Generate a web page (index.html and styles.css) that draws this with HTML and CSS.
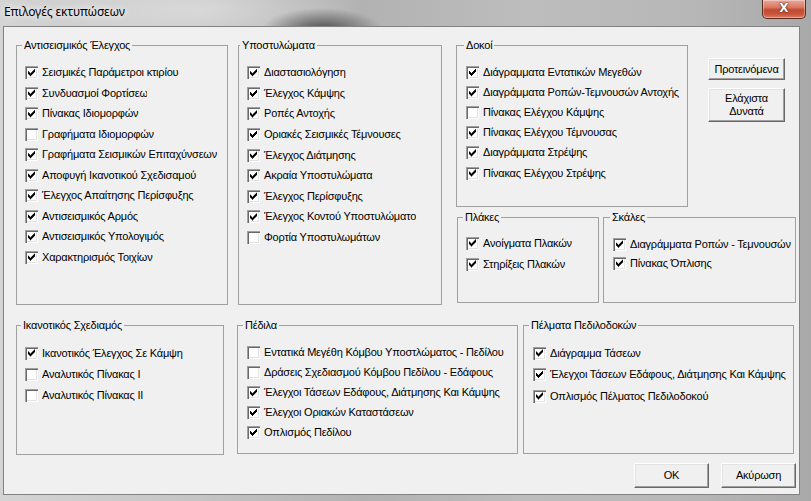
FILE: index.html
```html
<!DOCTYPE html>
<html lang="el">
<head>
<meta charset="utf-8">
<title>Επιλογές εκτυπώσεων</title>
<link rel="stylesheet" href="styles.css">
</head>
<body>
<div class="window">
  <div class="titlebar">
    <span class="title">Επιλογές εκτυπώσεων</span>
    <span class="close">X</span>
  </div>
  <div class="frame">
    <div class="client">
      <div class="top">
        <fieldset class="grp g-seis">
          <legend>Αντισεισμικός Έλεγχος</legend>
          <label class="chk"><span class="box on"></span><span class="txt">Σεισμικές Παράμετροι κτιρίου</span></label>
          <label class="chk"><span class="box on"></span><span class="txt clip-a">Συνδυασμοί Φορτίσεων</span></label>
          <label class="chk"><span class="box on"></span><span class="txt">Πίνακας Ιδιομορφών</span></label>
          <label class="chk"><span class="box"></span><span class="txt">Γραφήματα Ιδιομορφών</span></label>
          <label class="chk"><span class="box on"></span><span class="txt">Γραφήματα Σεισμικών Επιταχύνσεων</span></label>
          <label class="chk"><span class="box on"></span><span class="txt">Αποφυγή Ικανοτικού Σχεδισαμού</span></label>
          <label class="chk"><span class="box on"></span><span class="txt">Έλεγχος Απαίτησης Περίσφυξης</span></label>
          <label class="chk"><span class="box on"></span><span class="txt">Αντισεισμικός Αρμός</span></label>
          <label class="chk"><span class="box on"></span><span class="txt">Αντισεισμικός Υπολογιμός</span></label>
          <label class="chk"><span class="box on"></span><span class="txt">Χαρακτηρισμός Τοιχίων</span></label>
        </fieldset>
        <fieldset class="grp g-col">
          <legend>Υποστυλώματα</legend>
          <label class="chk"><span class="box on"></span><span class="txt">Διαστασιολόγηση</span></label>
          <label class="chk"><span class="box on"></span><span class="txt">Έλεγχος Κάμψης</span></label>
          <label class="chk"><span class="box on"></span><span class="txt">Ροπές Αντοχής</span></label>
          <label class="chk"><span class="box on"></span><span class="txt">Οριακές Σεισμικές Τέμνουσες</span></label>
          <label class="chk"><span class="box on"></span><span class="txt">Έλεγχος Διάτμησης</span></label>
          <label class="chk"><span class="box on"></span><span class="txt">Ακραία Υποστυλώματα</span></label>
          <label class="chk"><span class="box on"></span><span class="txt">Έλεγχος Περίσφυξης</span></label>
          <label class="chk"><span class="box on"></span><span class="txt clip-b">Έλεγχος Κοντού Υποστυλώματος</span></label>
          <label class="chk"><span class="box"></span><span class="txt">Φορτία Υποστυλωμάτων</span></label>
        </fieldset>
        <div class="col3">
          <div class="row-a">
            <fieldset class="grp g-beam">
              <legend>Δοκοί</legend>
              <label class="chk"><span class="box on"></span><span class="txt">Διάγραμματα Εντατικών Μεγεθών</span></label>
              <label class="chk"><span class="box on"></span><span class="txt">Διαγράμματα Ροπών-Τεμνουσών Αντοχής</span></label>
              <label class="chk"><span class="box"></span><span class="txt">Πίνακας Ελέγχου Κάμψης</span></label>
              <label class="chk"><span class="box on"></span><span class="txt">Πίνακας Ελέγχου Τέμνουσας</span></label>
              <label class="chk"><span class="box on"></span><span class="txt">Διαγράμματα Στρέψης</span></label>
              <label class="chk"><span class="box on"></span><span class="txt">Πίνακας Ελέγχου Στρέψης</span></label>
            </fieldset>
            <div class="side">
              <button class="btn">Προτεινόμενα</button>
              <button class="btn btn-tall">Ελάχιστα<br>Δυνατά</button>
            </div>
          </div>
          <div class="row-b">
            <fieldset class="grp g-slab">
              <legend>Πλάκες</legend>
              <label class="chk"><span class="box on"></span><span class="txt">Ανοίγματα Πλακών</span></label>
              <label class="chk"><span class="box on"></span><span class="txt">Στηρίξεις Πλακών</span></label>
            </fieldset>
            <fieldset class="grp g-stair">
              <legend>Σκάλες</legend>
              <label class="chk"><span class="box on"></span><span class="txt">Διαγράμματα Ροπών - Τεμνουσών</span></label>
              <label class="chk"><span class="box on"></span><span class="txt">Πίνακας Όπλισης</span></label>
            </fieldset>
          </div>
        </div>
      </div>
      <div class="bottom">
        <fieldset class="grp g-cap">
          <legend>Ικανοτικός Σχεδιαμός</legend>
          <label class="chk"><span class="box on"></span><span class="txt">Ικανοτικός Έλεγχος Σε Κάμψη</span></label>
          <label class="chk"><span class="box"></span><span class="txt">Αναλυτικός Πίνακας I</span></label>
          <label class="chk"><span class="box"></span><span class="txt">Αναλυτικός Πίνακας II</span></label>
        </fieldset>
        <fieldset class="grp g-foot">
          <legend>Πέδιλα</legend>
          <label class="chk"><span class="box"></span><span class="txt">Εντατικά Μεγέθη Κόμβου Υποστλώματος - Πεδίλου</span></label>
          <label class="chk"><span class="box"></span><span class="txt">Δράσεις Σχεδιασμού Κόμβου Πεδίλου - Εδάφους</span></label>
          <label class="chk"><span class="box on"></span><span class="txt">Έλεγχοι Τάσεων Εδάφους, Διάτμησης Και Κάμψης</span></label>
          <label class="chk"><span class="box on"></span><span class="txt">Έλεγχοι Οριακών Καταστάσεων</span></label>
          <label class="chk"><span class="box on"></span><span class="txt">Οπλισμός Πεδίλου</span></label>
        </fieldset>
        <fieldset class="grp g-strip">
          <legend>Πέλματα Πεδιλοδοκών</legend>
          <label class="chk"><span class="box on"></span><span class="txt">Διάγραμμα Τάσεων</span></label>
          <label class="chk"><span class="box on"></span><span class="txt">Έλεγχοι Τάσεων Εδάφους, Διάτμησης Και Κάμψης</span></label>
          <label class="chk"><span class="box on"></span><span class="txt">Οπλισμός Πέλματος Πεδιλοδοκού</span></label>
        </fieldset>
      </div>
      <div class="footer">
        <button class="btn btn-dlg">OK</button>
        <button class="btn btn-dlg">Ακύρωση</button>
      </div>
    </div>
  </div>
</div>
</body>
</html>
```
FILE: styles.css
```css
* { box-sizing: border-box; }
html, body { margin: 0; padding: 0; }
body {
  width: 811px;
  height: 501px;
  overflow: hidden;
  font-family: "Liberation Sans", Arial, sans-serif;
  font-size: 11px;
  color: #000;
}
.window {
  width: 811px;
  height: 501px;
  display: flex;
  flex-direction: column;
  background:
    radial-gradient(ellipse 60px 22px at 322px 30px, rgba(40,40,40,0.75), rgba(40,40,40,0) 100%),
    radial-gradient(ellipse 160px 40px at 200px 10px, rgba(255,255,255,0.35), rgba(255,255,255,0) 100%),
    linear-gradient(to right, #d4d4d4 0%, #c4c4c4 25%, #b2b2b2 45%, #bdbdbd 65%, #b7b7b7 85%, #a9a9a9 100%);
}
.titlebar {
  height: 26px;
  flex: none;
  display: flex;
  align-items: flex-start;
  padding-left: 4px;
}
.title {
  margin-top: 4px;
  font-family: "Noto Sans", "Open Sans", sans-serif;
  font-size: 12px;
  line-height: 15px;
  color: #000;
  text-shadow: 0 0 6px #fff, 0 0 10px rgba(255,255,255,0.9);
  letter-spacing: -0.1px;
}
.close {
  margin-left: auto;
  margin-right: 5px;
  width: 44px;
  height: 19px;
  border: 1px solid #5a2a22;
  border-top: 0;
  border-radius: 0 0 5px 5px;
  background: linear-gradient(to bottom, #e9a99a 0%, #d97a64 40%, #c24a30 55%, #c8563a 80%, #d9806a 100%);
  box-shadow: inset 0 0 0 1px rgba(255,255,255,0.35);
  color: #fff;
  font-family: "DejaVu Sans", sans-serif;
  font-weight: bold;
  font-size: 12px;
  line-height: 17px;
  text-align: center;
  text-shadow: 0 0 2px #4a1a10, 0 0 1px #4a1a10;
}
.frame {
  flex: 1;
  display: flex;
  padding: 0 11px 6px 3px;
}
.client {
  flex: 1;
  background: #f0f0f0;
  border: 1px solid rgba(40,40,40,0.55);
  padding: 12px 0 0 12px;
  letter-spacing: -0.2px;
}
.top, .bottom, .row-a, .row-b {
  display: flex;
  align-items: flex-start;
}
.col3 {
  margin-left: 14px;
  display: flex;
  flex-direction: column;
}
.row-b { margin-top: 4px; }
.bottom { margin-top: 14px; }
.side {
  margin-left: 20px;
  margin-top: 19px;
  display: flex;
  flex-direction: column;
  gap: 8px;
}
.footer {
  display: flex;
  justify-content: flex-end;
  gap: 12px;
  margin-top: 8px;
  margin-right: 3px;
}
.btn {
  width: 77px;
  height: 22px;
  padding: 0;
  font-family: "Liberation Sans", Arial, sans-serif;
  font-size: 11px;
  line-height: 13px;
  letter-spacing: -0.2px;
  color: #000;
  background: #f0f0f0;
  border: 1px solid;
  border-color: #fff #696969 #696969 #fff;
  box-shadow: inset -1px -1px 0 #a0a0a0, inset 1px 1px 0 #e3e3e3;
}
.btn-tall { height: 34px; }
.btn-dlg { width: 75px; height: 25px; }

/* group boxes */
.grp {
  --pl: 8px;
  --lg: 8px;
  --pt: 10.5px;
  --row: 20px;
  margin: 0;
  min-width: 0;
  padding: var(--pt) 2px 0 var(--pl);
  border: 1px solid #a0a0a0;
  overflow: hidden;
}
.grp legend {
  padding: 0 2px;
  margin-left: calc(var(--lg) - var(--pl) - 3px);
  font-size: 11px;
  line-height: 13px;
  white-space: nowrap;
}
.g-seis  { width: 212px; height: 266px; --row: 20.5px; }
.g-col   { margin-left: 10px; width: 204px; height: 266px; --lg: 4px; --row: 20.6px; }
.g-beam  { width: 232px; height: 168px; --pl: 9px; --lg: 10px; --row: 20.1px; }
.g-slab  { margin-left: 1px; width: 142px; height: 92px; --pt: 8.5px; --row: 21px; }
.g-stair { margin-left: 4px; width: 193px; height: 92px; --pl: 9px; --lg: 9px; --pt: 10.8px; --row: 19px; }
.g-cap   { width: 208px; height: 136px; --lg: 7px; --pt: 10.4px; --row: 21.3px; }
.g-foot  { margin-left: 13px; width: 281px; height: 135px; --pl: 9px; --pt: 11px; --row: 19.9px; }
.g-strip { margin-left: 5px; width: 271px; height: 135px; --pl: 9px; --pt: 10.3px; --row: 21.5px; }

/* checkboxes */
.chk {
  display: flex;
  align-items: center;
  height: var(--row);
  white-space: nowrap;
}
.box {
  flex: none;
  width: 13px;
  height: 13px;
  margin-right: 4px;
  background: #fff;
  box-shadow:
    inset 1px 1px 0 #a0a0a0,
    inset 2px 2px 0 #696969,
    inset -1px -1px 0 #fff,
    inset -2px -2px 0 #e3e3e3;
}
.box.on::after {
  content: "";
  display: block;
  width: 13px;
  height: 13px;
  background: #000;
  clip-path: polygon(3px 5px, 4px 5px, 4px 6px, 5px 6px, 5px 7px, 6px 7px, 6px 6px, 7px 6px, 7px 5px, 8px 5px, 8px 4px, 9px 4px, 9px 3px, 10px 3px,
    10px 6px, 9px 6px, 9px 7px, 8px 7px, 8px 8px, 7px 8px, 7px 9px, 6px 9px, 6px 10px, 5px 10px, 5px 9px, 4px 9px, 4px 8px, 3px 8px);
}
.txt {
  line-height: 13px;
}
.clip-a { display: block; width: 105px; overflow: hidden; }
.clip-b { display: block; width: 152px; overflow: hidden; }
```
